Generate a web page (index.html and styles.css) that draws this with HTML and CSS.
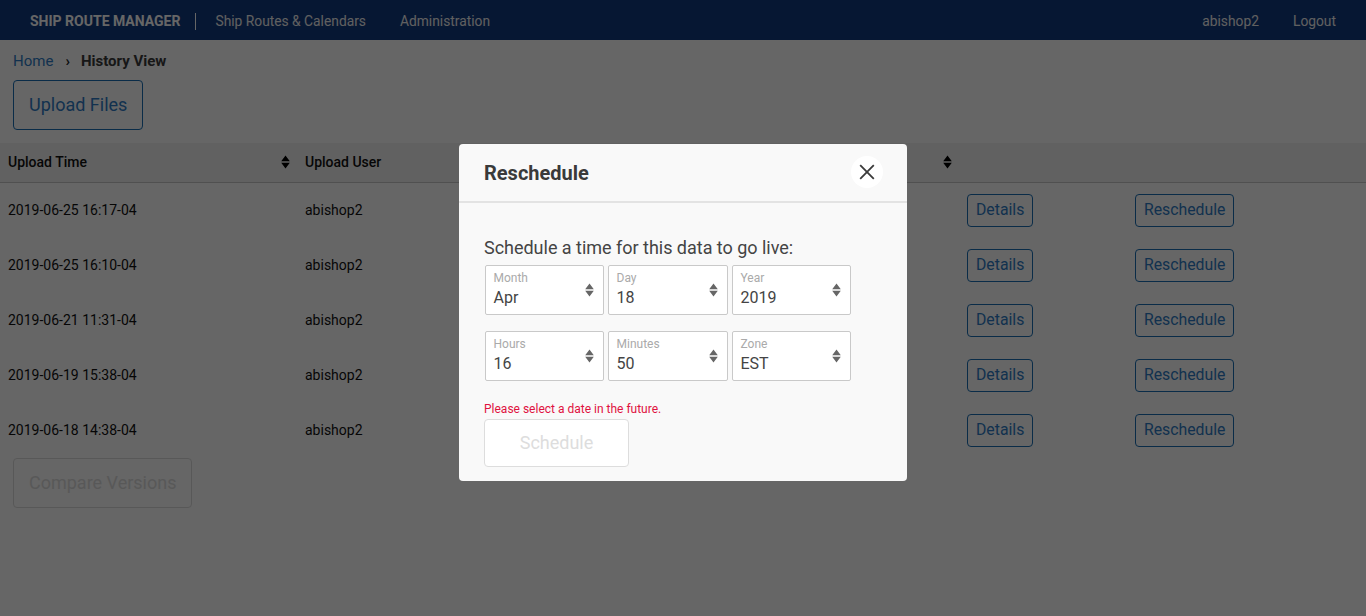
FILE: index.html
```html
<!DOCTYPE html>
<html lang="en">
<head>
<meta charset="utf-8">
<title>History View</title>
<link rel="stylesheet" href="styles.css">
</head>
<body>
<svg class="defs" width="0" height="0"><defs>
<symbol id="sort" viewBox="0 0 9 14"><path d="M4.500 0.500 8.800 6.200H0.200zM4.500 13.500 0.200 7.800h8.600z"/></symbol>
</defs></svg>
<nav class="nav">
  <a class="brand">SHIP ROUTE MANAGER</a>
  <a class="nav-link first">Ship Routes &amp; Calendars</a>
  <a class="nav-link">Administration</a>
  <span class="spacer"></span>
  <a class="nav-link user">abishop2</a>
  <a class="nav-link logout">Logout</a>
</nav>
<main>
  <div class="crumbs"><a class="crumb-home">Home</a><span class="crumb-sep">›</span><b class="crumb-cur">History View</b></div>
  <div class="top-action"><button class="btn btn-lg">Upload Files</button></div>
  <div class="table">
    <div class="row head">
      <div class="cell sortable">Upload Time<svg class="sort"><use href="#sort"/></svg></div>
      <div class="cell sortable">Upload User<svg class="sort"><use href="#sort"/></svg></div>
      <div class="cell act"></div><div class="cell act"></div>
    </div>
    <div class="row"><div class="cell">2019-06-25 16:17-04</div><div class="cell">abishop2</div><div class="cell act"><button class="btn btn-sm">Details</button></div><div class="cell act"><button class="btn btn-sm">Reschedule</button></div></div>
    <div class="row"><div class="cell">2019-06-25 16:10-04</div><div class="cell">abishop2</div><div class="cell act"><button class="btn btn-sm">Details</button></div><div class="cell act"><button class="btn btn-sm">Reschedule</button></div></div>
    <div class="row"><div class="cell">2019-06-21 11:31-04</div><div class="cell">abishop2</div><div class="cell act"><button class="btn btn-sm">Details</button></div><div class="cell act"><button class="btn btn-sm">Reschedule</button></div></div>
    <div class="row"><div class="cell">2019-06-19 15:38-04</div><div class="cell">abishop2</div><div class="cell act"><button class="btn btn-sm">Details</button></div><div class="cell act"><button class="btn btn-sm">Reschedule</button></div></div>
    <div class="row"><div class="cell">2019-06-18 14:38-04</div><div class="cell">abishop2</div><div class="cell act"><button class="btn btn-sm">Details</button></div><div class="cell act"><button class="btn btn-sm">Reschedule</button></div></div>
  </div>
  <div class="bottom-action"><button class="btn btn-lg btn-off">Compare Versions</button></div>
</main>
<div class="overlay">
  <section class="modal">
    <header class="modal-head">
      <h2 class="modal-title">Reschedule</h2>
      <button class="close" aria-label="Close"><svg width="16" height="16" viewBox="0 0 16 16"><path d="M1.200 1.200 14.800 14.800M14.800 1.200 1.200 14.800"/></svg></button>
    </header>
    <div class="modal-body">
      <p class="lead">Schedule a time for this data to go live:</p>
      <div class="selects">
        <div class="select"><span class="sel-label">Month</span><span class="sel-value">Apr</span><svg class="sel-arrow"><use href="#sort"/></svg></div>
        <div class="select"><span class="sel-label">Day</span><span class="sel-value">18</span><svg class="sel-arrow"><use href="#sort"/></svg></div>
        <div class="select"><span class="sel-label">Year</span><span class="sel-value">2019</span><svg class="sel-arrow"><use href="#sort"/></svg></div>
        <div class="select"><span class="sel-label">Hours</span><span class="sel-value">16</span><svg class="sel-arrow"><use href="#sort"/></svg></div>
        <div class="select"><span class="sel-label">Minutes</span><span class="sel-value">50</span><svg class="sel-arrow"><use href="#sort"/></svg></div>
        <div class="select"><span class="sel-label">Zone</span><span class="sel-value">EST</span><svg class="sel-arrow"><use href="#sort"/></svg></div>
      </div>
      <p class="error">Please select a date in the future.</p>
      <button class="btn-schedule">Schedule</button>
    </div>
  </section>
</div>
</body>
</html>
```
FILE: styles.css
```css
* { box-sizing: border-box; }
html, body { height: 100%; }
body { margin: 0; font-family: Roboto, "Liberation Sans", sans-serif; color: #212529; background: #fff; overflow: hidden; }
.defs { position: absolute; }
button { font-family: inherit; cursor: pointer; }

.nav { display: flex; align-items: center; height: 40px; padding: 2px 30px 0; background: #103a80; }
.brand { font-size: 14px; font-weight: 700; color: #fff; padding-right: 15px; border-right: 1px solid #fff; line-height: 17px; }
.nav-link { font-size: 13.8px; color: #f0f0f0; margin-left: 34px; line-height: 20px; }
.nav-link.first { margin-left: 19px; }
.spacer { flex: 1; }
.nav-link.logout { margin-left: 34px; }

.crumbs { display: flex; align-items: center; height: 40px; padding: 2px 13px 0; font-size: 15px; }
.crumb-home { color: #2f7cc5; }
.crumb-sep { margin: 0 11px 0 12px; font-weight: 700; }
.crumb-cur { font-weight: 700; color: #3a3a3a; }

.top-action { padding-left: 13px; height: 63px; }
.btn { background: transparent; color: #2f7cc5; border: 1px solid #1a6fb5; border-radius: 4px; }
.btn-lg { height: 50px; padding: 0 15px 2px; font-size: 18px; }
.btn-sm { height: 33px; padding: 0 8px 2px; font-size: 15.8px; }
.btn-off { padding-right: 14px; color: #ddd; border-color: #ddd; }

.table { display: flex; flex-direction: column; }
.row { display: grid; grid-template-columns: 297px 662px 168px 1fr; height: 55px; align-items: center; font-size: 14px; color: #111; }
.row.head { height: 40px; background: #f2f2f2; border-bottom: 1px solid #c8c8c8; font-weight: 500; }
.cell { padding-left: 8px; padding-bottom: 2px; }
.cell.act { padding-bottom: 0; }
.sortable { display: flex; align-items: center; justify-content: space-between; padding-right: 7px; }
.sort { width: 9px; height: 14px; fill: #000; }

.bottom-action { padding: 0 13px; }

.overlay { position: fixed; inset: 0; display: flex; justify-content: center; align-items: flex-start; padding-top: 144px; background: rgba(0, 0, 0, .6); }
.modal { width: 448px; height: 337px; background: #f9f9f9; border-radius: 4px; }
.modal-head { display: flex; align-items: center; justify-content: space-between; height: 59px; padding: 0 24px 2px 25px; border-bottom: 2px solid #e3e3e3; }
.modal-title { margin: 2px 0 0; font-size: 20px; font-weight: 700; color: #3a3a3a; }
.close { display: flex; align-items: center; justify-content: center; width: 32px; height: 32px; padding: 0; border: 0; border-radius: 50%; background: #fff; }
.close path { fill: none; stroke: #3a3a3a; stroke-width: 1.800; }
.modal-body { padding: 33px 25px 0; }
.lead { margin: 0 0 5px; font-size: 18px; line-height: 24px; color: #444; letter-spacing: -0.02px; }
.selects { display: grid; grid-template-columns: 119px 120px 119px; column-gap: 4px; row-gap: 16px; margin-left: 1px; }
.select { position: relative; height: 50px; padding: 5px 8px 5px 7.500px; background: #fff; border: 1px solid #c9c9c9; border-radius: 2px; }
.sel-label { display: block; font-size: 12px; line-height: 14px; color: #aaa; }
.sel-value { display: block; font-size: 16px; line-height: 22px; margin-top: 2px; color: #444; }
.sel-arrow { position: absolute; top: 17px; right: 9px; width: 9px; height: 14px; fill: #666; }
.error { margin: 21px 0 3px; font-size: 12px; line-height: 14px; color: #e0123f; }
.btn-schedule { width: 145px; height: 48px; padding: 0 0 2px; font-size: 18px; color: #ddd; background: #fff; border: 1px solid #ddd; border-radius: 4px; }
```
